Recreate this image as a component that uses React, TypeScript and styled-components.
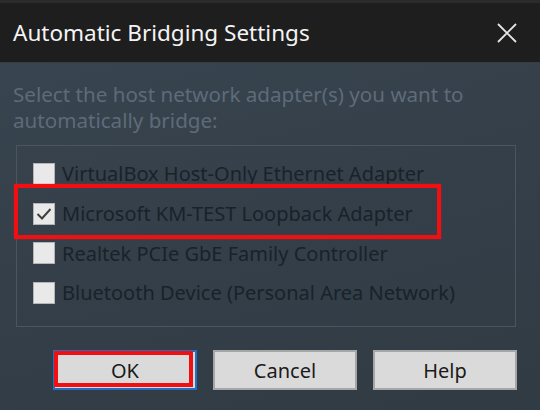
import React from "react";
import styled, { createGlobalStyle, css } from "styled-components";

const GlobalStyle = createGlobalStyle`
  *, *::before, *::after {
    box-sizing: border-box;
  }
  html, body {
    margin: 0;
    padding: 0;
    background: #333e48;
  }
  body {
    font-family: "Noto Sans", "Open Sans", "DejaVu Sans", sans-serif;
  }
`;

const adapters = [
  { name: "VirtualBox Host-Only Ethernet Adapter", checked: false },
  { name: "Microsoft KM-TEST Loopback Adapter", checked: true, highlighted: true },
  { name: "Realtek PCIe GbE Family Controller", checked: false },
  { name: "Bluetooth Device (Personal Area Network)", checked: false },
];

const App: React.FC = () => {
  return (
    <>
      <GlobalStyle />
      <Window>
        <TitleBar>
          <Title>Automatic Bridging Settings</Title>
          <Close aria-label="Close">
            <svg width="20" height="20" viewBox="0 0 20 20">
              <path d="M1 1 L19 19 M19 1 L1 19" stroke="#e6e6e6" strokeWidth="1.8" fill="none" />
            </svg>
          </Close>
        </TitleBar>

        <Body>
          <Description>
            Select the host network adapter(s) you want to
            <br />
            automatically bridge:
          </Description>

          <Group>
            {adapters.map((adapter) => (
              <Row key={adapter.name} highlighted={adapter.highlighted}>
                <Box>
                  {adapter.checked && (
                    <svg width="20" height="20" viewBox="0 0 20 20">
                      <path d="M3.5 10 L8 14.5 L16.5 5" stroke="#3f3f3f" strokeWidth="2" fill="none" />
                    </svg>
                  )}
                </Box>
                <Label>{adapter.name}</Label>
              </Row>
            ))}
          </Group>

          <Buttons>
            <Button focused>OK</Button>
            <Button>Cancel</Button>
            <Button>Help</Button>
          </Buttons>
        </Body>
      </Window>
    </>
  );
};

export default App;

const Window = styled.div`
  width: 540px;
  height: 410px;
  display: flex;
  flex-direction: column;
  overflow: hidden;
`;

const TitleBar = styled.div`
  height: 63px;
  flex-shrink: 0;
  border-top: 3px solid #2b2b2b;
  border-bottom: 1px solid #3a3d40;
  background: #1e1e1e;
  display: flex;
  align-items: center;
  justify-content: space-between;
  padding: 0 23px 0 13px;
`;

const Title = styled.div`
  color: #f4f4f4;
  font-size: 22.5px;
`;

const Close = styled.button`
  border: none;
  background: none;
  padding: 0;
  width: 20px;
  height: 20px;
  display: flex;
`;

const Body = styled.div`
  flex: 1;
  background: linear-gradient(165deg, #38444f 0%, #343f49 45%, #313b44 100%);
  padding: 18px 23px 0 13px;
  display: flex;
  flex-direction: column;
`;

const Description = styled.div`
  color: #5e6b79;
  font-size: 20.6px;
  line-height: 26px;
`;

const Group = styled.div`
  margin: 12px 1px 0 3px;
  height: 182px;
  flex-shrink: 0;
  border: 1px solid #4a5560;
  padding: 8px 0 0 16px;
  display: flex;
  flex-direction: column;
`;

const Row = styled.div<{ highlighted?: boolean }>`
  position: relative;
  height: 39.7px;
  flex-shrink: 0;
  display: flex;
  align-items: center;
  gap: 7px;

  ${(p) =>
    p.highlighted &&
    css`
      &::after {
        content: "";
        position: absolute;
        left: -19px;
        top: -10px;
        width: 427px;
        height: 55px;
        border: 4px solid #f20f12;
        box-shadow: 0 0 1px #f20f12;
      }
    `}
`;

const Box = styled.div`
  width: 22px;
  height: 22px;
  background: #e9e9e9;
  border: 1px solid #b5b5b5;
  display: flex;
  align-items: center;
  justify-content: center;
  flex-shrink: 0;
`;

const Label = styled.div`
  color: #19222a;
  font-size: 20px;
  white-space: nowrap;
`;

const Buttons = styled.div`
  margin-top: 23px;
  display: flex;
  justify-content: flex-end;
  gap: 16px;
`;

const Button = styled.button<{ focused?: boolean }>`
  position: relative;
  width: 144px;
  height: 40px;
  background: #dadada;
  border: 2px solid #a6a6a6;
  color: #1a1a1a;
  font-family: "Noto Sans", "Open Sans", sans-serif;
  font-size: 20px;
  padding: 0;

  ${(p) =>
    p.focused &&
    css`
      border-color: #1f6fc4;

      &::after {
        content: "";
        position: absolute;
        left: -1px;
        top: -1px;
        right: 2px;
        bottom: 1px;
        border: 4px solid #f20f12;
      }
    `}
`;
